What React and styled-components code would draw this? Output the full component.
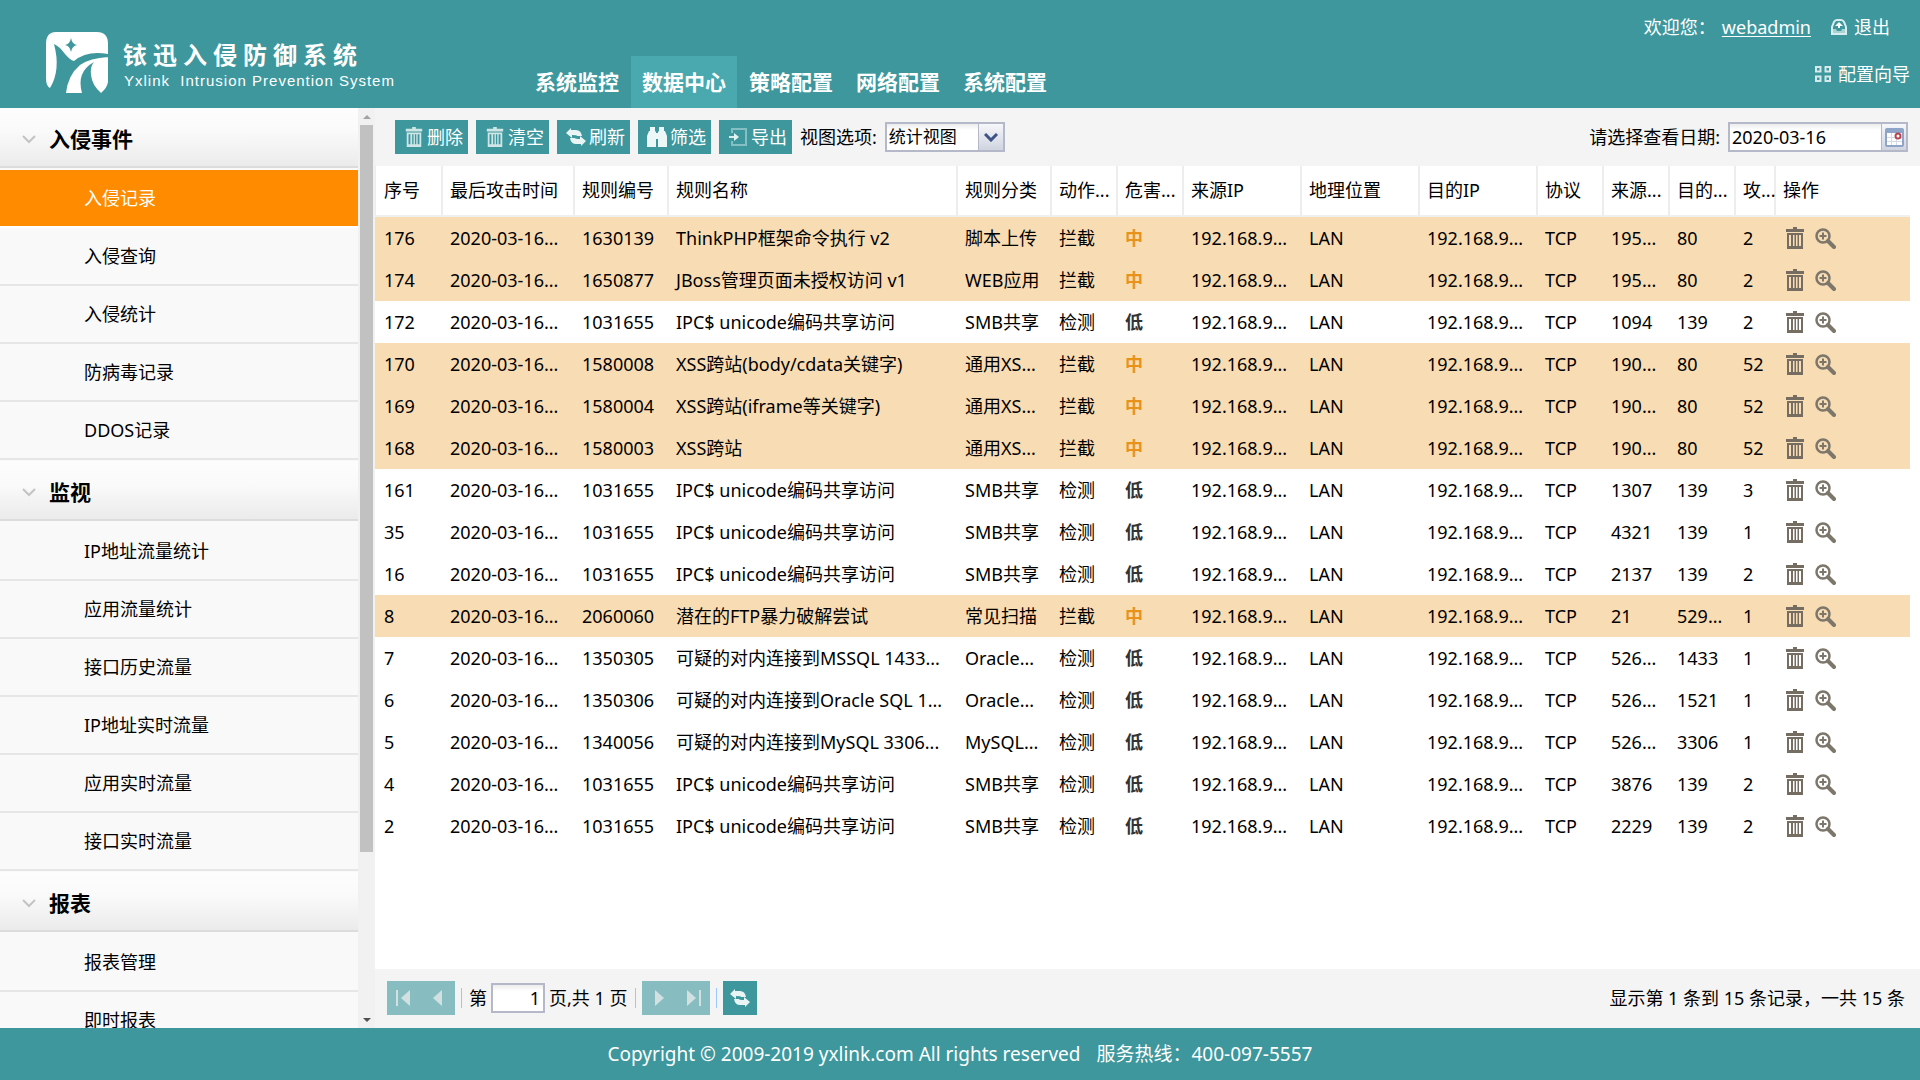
import React from "react";
import styled, { createGlobalStyle, css } from "styled-components";

const TEAL = "#3d979d";

const GlobalStyle = createGlobalStyle`
  * { box-sizing: border-box; }
  html, body, #root { height: 100%; }
  body {
    margin: 0;
    background: #fff;
    color: #000;
    font: 18px/24px "Noto Sans", "Noto Sans CJK SC", sans-serif;
  }
  button, input, select { font: inherit; color: inherit; margin: 0; padding: 0; border: 0; }
  button { cursor: pointer; }
  a { color: inherit; text-decoration: none; }
  svg { display: block; flex: none; }
`;

const Page = styled.div`
  display: flex;
  flex-direction: column;
  height: 100vh;
`;

/* ---------- header ---------- */

const Header = styled.header`
  display: flex;
  height: 108px;
  flex: none;
  background: ${TEAL};
  color: #fff;
`;

const Brand = styled.div`
  display: flex;
  align-items: flex-start;
  gap: 14px;
  width: 524px;
  padding: 32px 0 0 45px;
`;

const BrandText = styled.div`
  display: flex;
  flex-direction: column;
  padding-top: 7px;
`;

const BrandName = styled.div`
  font-size: 24px;
  line-height: 32px;
  font-weight: 700;
  letter-spacing: 6px;
  white-space: nowrap;
`;

const BrandSub = styled.div`
  padding-left: 1px;
  font: 15px/20px "Liberation Sans", sans-serif;
  letter-spacing: 1px;
  white-space: pre;
`;

const Nav = styled.nav`
  display: flex;
  gap: 1px;
  align-self: flex-end;
`;

const NavTab = styled.a`
  height: 52px;
  padding: 0 11px;
  font-size: 21px;
  font-weight: 700;
  line-height: 52px;
  white-space: nowrap;
  background: ${(p) => (p.$active ? "#49a9af" : "transparent")};
`;

const Account = styled.div`
  display: flex;
  flex-direction: column;
  align-items: flex-end;
  gap: 23px;
  margin-left: auto;
  padding: 15px 10px 0 0;
`;

const AccountRow = styled.div`
  display: flex;
  align-items: center;
  gap: 20px;
  padding-right: ${(p) => p.$inset || 0}px;
`;

const Welcome = styled.span`
  display: flex;
  gap: 6px;
`;

const IconLink = styled.a`
  display: flex;
  align-items: center;
  gap: 7px;
`;

const UserLink = styled.a`
  text-decoration: underline;
  text-underline-offset: 2px;
`;

/* ---------- side menu ---------- */

const Body = styled.div`
  display: flex;
  flex: 1;
  min-height: 0;
`;

const Side = styled.aside`
  display: flex;
  width: 375px;
  flex: none;
`;

const Menu = styled.nav`
  flex: 1;
  overflow: hidden;
  background: #f9f9f9;
`;

const MenuHead = styled.h2`
  display: flex;
  align-items: center;
  gap: 12px;
  height: 60px;
  margin: 0;
  padding: 4px 21px 0;
  border-bottom: 2px solid #dcdcdc;
  background: linear-gradient(#fdfdfd, #fafafa 40%, #ebebeb);
  font-size: 21px;
  font-weight: 700;
`;

const MenuList = styled.ul`
  list-style: none;
  margin: 0;
  padding: 2px 0 1px;
`;

const MenuLink = styled.a`
  display: block;
  height: 58px;
  padding-left: 84px;
  line-height: 57px;
  border-bottom: 2px solid #e6e6e6;
  ${(p) =>
    p.$active &&
    css`
      background: #ff8c00;
      background-clip: padding-box;
      border-color: #fff;
      color: #fff;
    `}
`;

const Scroll = styled.div`
  display: flex;
  flex-direction: column;
  width: 17px;
  background: #f1f1f1;
`;

const ScrollEnd = styled.span`
  display: flex;
  align-items: center;
  justify-content: center;
  height: 17px;
`;

const ScrollTrack = styled.div`
  flex: 1;
  padding: 0 2px;
`;

const ScrollThumb = styled.div`
  height: 82%;
  background: #c1c1c1;
`;

/* ---------- main panel ---------- */

const Main = styled.main`
  display: flex;
  flex-direction: column;
  flex: 1;
  min-width: 0;
`;

const Bar = styled.div`
  display: flex;
  align-items: center;
  gap: 8px;
  flex: none;
  height: 58px;
  padding: 0 12px 0 20px;
  background: #f4f4f4;
`;

const ToolButton = styled.button`
  display: flex;
  align-items: center;
  gap: 4px;
  height: 34px;
  padding: 0 5px 0 10px;
  background: ${TEAL};
  color: #fff;
  white-space: nowrap;
`;

const ToolIcon = styled.span`
  display: flex;
  justify-content: center;
  width: 18px;
`;

const FieldLabel = styled.label`
  white-space: nowrap;
  margin-left: ${(p) => (p.$push ? "auto" : "0")};
`;

const Field = styled.span`
  display: flex;
  width: ${(p) => p.$width}px;
  height: 30px;
  border: 2px solid #b5b8c8;
  background: linear-gradient(#ececec, #fff 6px);
`;

const fieldText = css`
  flex: 1;
  min-width: 0;
  height: 26px;
  padding: 0 2px;
  background: transparent;
  outline: none;
`;

const Select = styled.select`
  ${fieldText}
  appearance: none;
  font-size: 17px;
`;

const TextInput = styled.input`
  ${fieldText}
`;

const Trigger = styled.button`
  display: flex;
  align-items: center;
  justify-content: center;
  width: 25px;
  height: 26px;
  flex: none;
  border-left: 1px solid #b5b8c8;
  background: linear-gradient(#f6f7fa, #cfd4e0);
`;

const GridArea = styled.div`
  flex: 1;
  min-height: 0;
  overflow: hidden;
  padding-right: 10px;
  background: #fff;
`;

const Table = styled.table`
  width: 100%;
  table-layout: fixed;
  border-collapse: separate;
  border-spacing: 0;
`;

const Th = styled.th`
  height: 51px;
  padding: 0 0 2px 8px;
  overflow: hidden;
  border-bottom: 2px solid #f0f0f0;
  box-shadow: inset 1px 0 #ededed, inset -1px 0 #ededed;
  font-weight: 400;
  text-align: left;
  white-space: nowrap;
  &:first-child { padding-left: 9px; }
  &:last-child { box-shadow: inset 1px 0 #ededed; }
`;

const Row = styled.tr`
  background: ${(p) => (p.$alert ? "#f8dcb4" : "#fff")};
`;

const Td = styled.td`
  height: 42px;
  padding: 0 0 0 8px;
  overflow: hidden;
  white-space: nowrap;
  &:first-child { padding-left: 9px; }
`;

const Level = styled.strong`
  color: ${(p) => (p.$alert ? "#e8921c" : "#333")};
`;

const Actions = styled.div`
  display: flex;
  align-items: center;
  gap: 11px;
  padding-left: 3px;
`;

const IconButton = styled.button`
  background: none;
  line-height: 0;
`;

/* ---------- pager ---------- */

const PagerBar = styled(Bar)`
  gap: 6px;
  height: 59px;
  padding: 0 15px 1px 12px;
`;

const PagerPair = styled.div`
  display: flex;
`;

const PagerButton = styled.button`
  display: flex;
  align-items: center;
  justify-content: center;
  width: 34px;
  height: 34px;
  background: ${(p) => (p.disabled ? "#87bdc1" : TEAL)};
`;

const Divider = styled.span`
  width: 1px;
  height: 20px;
  background: #98c8ff;
`;

const PageField = styled.label`
  display: flex;
  align-items: center;
  gap: 4px;
  padding: 0 2px 0 1px;
  white-space: nowrap;
`;

const PageInput = styled.input`
  width: 54px;
  height: 30px;
  padding-right: 3px;
  border: 2px solid #b5b8c8;
  background: linear-gradient(#ececec, #fff 6px);
  text-align: right;
`;

const Summary = styled.span`
  margin-left: auto;
  white-space: nowrap;
`;

const Footer = styled.footer`
  display: flex;
  align-items: center;
  justify-content: center;
  gap: 16px;
  flex: none;
  height: 52px;
  background: ${TEAL};
  color: #fff;
  font-size: 19px;
`;

/* ---------- icons ---------- */

const Logo = () => (
  <svg width="64" height="62" viewBox="0 0 64 62" aria-hidden="true">
    <path
      fill="#fff"
      d="M11 0H52Q63 0 63 12V50Q62 56 56 61Q47 53 46 43Q45 34 49 30Q31 40 37 61H21Q23 43 35 33Q45 26 63 25V22Q42 18 29 29Q25 28 20 22Q14 14 9 12Q16 38 5 56Q1 54 1 46V12Q1 0 11 0Z"
    />
    <path fill={TEAL} d="M26 6Q27 12 32 13Q27 14 26 20Q25 14 20 13Q25 12 26 6Z" />
  </svg>
);

const TrashIcon = ({ color = "#cfe6e7", height = 20 }) => (
  <svg width="18" height={height} viewBox="0 0 18 22" fill={color} aria-hidden="true">
    <path d="M7 0h4v2h7v3H0V2h7z" />
    <path
      fillRule="evenodd"
      d="M1 6h16v16H1zM3 8v11h2V8zM7 8v11h1.500V8zM10 8v11h1.500V8zM13 8v11h2V8z"
    />
  </svg>
);

const RefreshIcon = () => (
  <svg width="20" height="18" viewBox="0 0 20 18" fill="#e9f4f4" aria-hidden="true">
    <path d="M0 5L5 0v2h5q5 0 6 6h-5q0-1-5-1v3z" />
    <path d="M20 13l-5 5v-2h-5q-5 0-6-6h5q0 1 5 1v-3z" />
  </svg>
);

const BinocularsIcon = () => (
  <svg width="20" height="20" viewBox="0 0 20 20" fill="#eef7f7" aria-hidden="true">
    <path d="M3 0h5v4l1 1v15H0V9l2-5h1zM12 0h5v4h1l2 5v11h-9V5l1-1z" />
    <path d="M8 6h4v6H8z" />
  </svg>
);

const ExportIcon = () => (
  <svg width="18" height="20" viewBox="0 0 18 20" fill="none" stroke="#86bfc3" strokeWidth="2" aria-hidden="true">
    <path d="M3 6V2h14v16H3v-4" />
    <path d="M0 10h6" stroke="#d8ecec" />
    <path d="M5 6l5 4-5 4z" fill="#e3f1f1" stroke="none" />
  </svg>
);

const ZoomIcon = () => (
  <svg width="21" height="21" viewBox="0 0 21 21" fill="none" stroke="#7d766b" aria-hidden="true">
    <circle cx="8" cy="8" r="6.500" strokeWidth="2.500" />
    <path d="M4.500 8h7M8 4.500v7" strokeWidth="2" />
    <path d="M13 13l6 6" strokeWidth="4" strokeLinecap="round" />
  </svg>
);

const LogoutIcon = () => (
  <svg width="16" height="16" viewBox="0 0 16 16" aria-hidden="true">
    <path d="M1 15V8l2-5q1-2 3-2h4q2 0 3 2l2 5v7z" fill="none" stroke="#d9edee" strokeWidth="2" />
    <path d="M2 10h3l1 2h4l1-2h3v4H2z" fill="#a9d2d4" />
    <path d="M8 3l4 4H9v2H7V7H4z" fill="#fff" />
  </svg>
);

const GuideIcon = () => (
  <svg width="16" height="16" viewBox="0 0 16 16" fill="none" stroke="#d4eaeb" strokeWidth="2" aria-hidden="true">
    <path d="M1 1h4.500v4.500H1zM10.500 1H15v4.500h-4.500zM1 10.500h4.500V15H1zM10.500 10.500H15V15h-4.500z" />
  </svg>
);

const ChevronIcon = ({ color, width = 14, stroke = 2 }) => (
  <svg width={width} height="9" viewBox="0 0 14 9" fill="none" stroke={color} strokeWidth={stroke} aria-hidden="true">
    <path d="M1 1l6 6 6-6" />
  </svg>
);

const CalendarIcon = () => (
  <svg width="19" height="19" viewBox="0 0 19 19" aria-hidden="true">
    <rect x="1" y="1" width="17" height="17" rx="1" fill="#fff" stroke="#8ea4c8" strokeWidth="2" />
    <path fill="#8ea4c8" d="M1 1h17v4H1z" />
    <path stroke="#d5dbe6" d="M6.500 5v12M11.500 5v12M2 9.500h15M2 13.500h15" />
    <circle cx="13" cy="8" r="2.500" fill="#fff" stroke="#b8434e" strokeWidth="2" />
  </svg>
);

const Triangle = ({ up, color }) => (
  <svg width="8" height="4" viewBox="0 0 8 4" fill={color} aria-hidden="true">
    <path d={up ? "M0 4l4-4 4 4z" : "M0 0l4 4 4-4z"} />
  </svg>
);

const PageArrow = ({ back, edge }) => (
  <svg
    width="20"
    height="18"
    viewBox="0 0 20 18"
    fill="#d3e0e2"
    transform={back ? "scale(-1 1)" : undefined}
    aria-hidden="true"
  >
    <path d={edge ? "M4 1l9 8-9 8zM16 1h2v16h-2z" : "M6 1l9 8-9 8z"} />
  </svg>
);

/* ---------- data ---------- */

const TABS = ["系统监控", "数据中心", "策略配置", "网络配置", "系统配置"];

const MENU = [
  { title: "入侵事件", items: ["入侵记录", "入侵查询", "入侵统计", "防病毒记录", "DDOS记录"] },
  {
    title: "监视",
    items: ["IP地址流量统计", "应用流量统计", "接口历史流量", "IP地址实时流量", "应用实时流量", "接口实时流量"],
  },
  { title: "报表", items: ["报表管理", "即时报表"] },
];

const TOOLS = [
  ["删除", <TrashIcon />],
  ["清空", <TrashIcon />],
  ["刷新", <RefreshIcon />],
  ["筛选", <BinocularsIcon />],
  ["导出", <ExportIcon />],
];

const COLUMNS = [
  ["序号", 67],
  ["最后攻击时间", 132],
  ["规则编号", 94],
  ["规则名称", null],
  ["规则分类", 94],
  ["动作...", 66],
  ["危害...", 66],
  ["来源IP", 118],
  ["地理位置", 118],
  ["目的IP", 118],
  ["协议", 66],
  ["来源...", 66],
  ["目的...", 66],
  ["攻...", 40],
  ["操作", 135],
];

const ROWS = [
  ["176", "1630139", "ThinkPHP框架命令执行 v2", "脚本上传", 1, "195...", "80", "2"],
  ["174", "1650877", "JBoss管理页面未授权访问 v1", "WEB应用", 1, "195...", "80", "2"],
  ["172", "1031655", "IPC$ unicode编码共享访问", "SMB共享", 0, "1094", "139", "2"],
  ["170", "1580008", "XSS跨站(body/cdata关键字)", "通用XS...", 1, "190...", "80", "52"],
  ["169", "1580004", "XSS跨站(iframe等关键字)", "通用XS...", 1, "190...", "80", "52"],
  ["168", "1580003", "XSS跨站", "通用XS...", 1, "190...", "80", "52"],
  ["161", "1031655", "IPC$ unicode编码共享访问", "SMB共享", 0, "1307", "139", "3"],
  ["35", "1031655", "IPC$ unicode编码共享访问", "SMB共享", 0, "4321", "139", "1"],
  ["16", "1031655", "IPC$ unicode编码共享访问", "SMB共享", 0, "2137", "139", "2"],
  ["8", "2060060", "潜在的FTP暴力破解尝试", "常见扫描", 1, "21", "529...", "1"],
  ["7", "1350305", "可疑的对内连接到MSSQL 1433...", "Oracle...", 0, "526...", "1433", "1"],
  ["6", "1350306", "可疑的对内连接到Oracle SQL 1...", "Oracle...", 0, "526...", "1521", "1"],
  ["5", "1340056", "可疑的对内连接到MySQL 3306...", "MySQL...", 0, "526...", "3306", "1"],
  ["4", "1031655", "IPC$ unicode编码共享访问", "SMB共享", 0, "3876", "139", "2"],
  ["2", "1031655", "IPC$ unicode编码共享访问", "SMB共享", 0, "2229", "139", "2"],
];

function EventRow({ data }) {
  const [id, rule, name, kind, alert, srcPort, dstPort, count] = data;
  return (
    <Row $alert={alert}>
      <Td>{id}</Td>
      <Td>2020-03-16...</Td>
      <Td>{rule}</Td>
      <Td>{name}</Td>
      <Td>{kind}</Td>
      <Td>{alert ? "拦截" : "检测"}</Td>
      <Td>
        <Level $alert={alert}>{alert ? "中" : "低"}</Level>
      </Td>
      <Td>192.168.9...</Td>
      <Td>LAN</Td>
      <Td>192.168.9...</Td>
      <Td>TCP</Td>
      <Td>{srcPort}</Td>
      <Td>{dstPort}</Td>
      <Td>{count}</Td>
      <Td>
        <Actions>
          <IconButton type="button" aria-label="删除">
            <TrashIcon color="#756d62" height={22} />
          </IconButton>
          <IconButton type="button" aria-label="查看">
            <ZoomIcon />
          </IconButton>
        </Actions>
      </Td>
    </Row>
  );
}

export default function App() {
  return (
    <Page lang="zh-CN">
      <GlobalStyle />
      <Header>
        <Brand>
          <Logo />
          <BrandText>
            <BrandName>铱迅入侵防御系统</BrandName>
            <BrandSub>Yxlink  Intrusion Prevention System</BrandSub>
          </BrandText>
        </Brand>
        <Nav>
          {TABS.map((t, i) => (
            <NavTab key={t} href="#" $active={i === 1}>
              {t}
            </NavTab>
          ))}
        </Nav>
        <Account>
          <AccountRow $inset={20}>
            <Welcome>
              <span>欢迎您：</span>
              <UserLink href="#">webadmin</UserLink>
            </Welcome>
            <IconLink href="#">
              <LogoutIcon />
              退出
            </IconLink>
          </AccountRow>
          <AccountRow>
            <IconLink href="#">
              <GuideIcon />
              配置向导
            </IconLink>
          </AccountRow>
        </Account>
      </Header>

      <Body>
        <Side>
          <Menu>
            {MENU.map((group, g) => (
              <section key={group.title}>
                <MenuHead>
                  <ChevronIcon color="#c4c4c4" width={16} />
                  <span>{group.title}</span>
                </MenuHead>
                <MenuList>
                  {group.items.map((item, i) => (
                    <li key={item}>
                      <MenuLink href="#" $active={g === 0 && i === 0}>
                        {item}
                      </MenuLink>
                    </li>
                  ))}
                </MenuList>
              </section>
            ))}
          </Menu>
          <Scroll aria-hidden="true">
            <ScrollEnd>
              <Triangle up color="#a3a3a3" />
            </ScrollEnd>
            <ScrollTrack>
              <ScrollThumb />
            </ScrollTrack>
            <ScrollEnd>
              <Triangle color="#505050" />
            </ScrollEnd>
          </Scroll>
        </Side>

        <Main>
          <Bar>
            {TOOLS.map(([label, icon]) => (
              <ToolButton key={label} type="button">
                <ToolIcon>{icon}</ToolIcon>
                {label}
              </ToolButton>
            ))}
            <FieldLabel htmlFor="view">视图选项:</FieldLabel>
            <Field $width={120}>
              <Select id="view" defaultValue="统计视图">
                <option>统计视图</option>
              </Select>
              <Trigger type="button" aria-label="展开">
                <ChevronIcon color="#3c5385" width={14} stroke={3} />
              </Trigger>
            </Field>
            <FieldLabel htmlFor="date" $push>
              请选择查看日期:
            </FieldLabel>
            <Field $width={180}>
              <TextInput id="date" type="text" defaultValue="2020-03-16" />
              <Trigger type="button" aria-label="选择日期">
                <CalendarIcon />
              </Trigger>
            </Field>
          </Bar>

          <GridArea>
            <Table>
              <colgroup>
                {COLUMNS.map(([name, width]) => (
                  <col key={name} style={width ? { width } : undefined} />
                ))}
              </colgroup>
              <thead>
                <tr>
                  {COLUMNS.map(([name]) => (
                    <Th key={name}>{name}</Th>
                  ))}
                </tr>
              </thead>
              <tbody>
                {ROWS.map((r) => (
                  <EventRow key={r[0]} data={r} />
                ))}
              </tbody>
            </Table>
          </GridArea>

          <PagerBar>
            <PagerPair>
              <PagerButton type="button" disabled aria-label="第一页">
                <PageArrow back edge />
              </PagerButton>
              <PagerButton type="button" disabled aria-label="上一页">
                <PageArrow back />
              </PagerButton>
            </PagerPair>
            <Divider />
            <PageField>
              第
              <PageInput type="text" defaultValue="1" />
              页,共 1 页
            </PageField>
            <Divider />
            <PagerPair>
              <PagerButton type="button" disabled aria-label="下一页">
                <PageArrow />
              </PagerButton>
              <PagerButton type="button" disabled aria-label="最后一页">
                <PageArrow edge />
              </PagerButton>
            </PagerPair>
            <Divider />
            <PagerButton type="button" aria-label="刷新">
              <RefreshIcon />
            </PagerButton>
            <Summary>显示第 1 条到 15 条记录，一共 15 条</Summary>
          </PagerBar>
        </Main>
      </Body>

      <Footer>
        <span>Copyright © 2009-2019 yxlink.com All rights reserved</span>
        <span>服务热线：400-097-5557</span>
      </Footer>
    </Page>
  );
}
